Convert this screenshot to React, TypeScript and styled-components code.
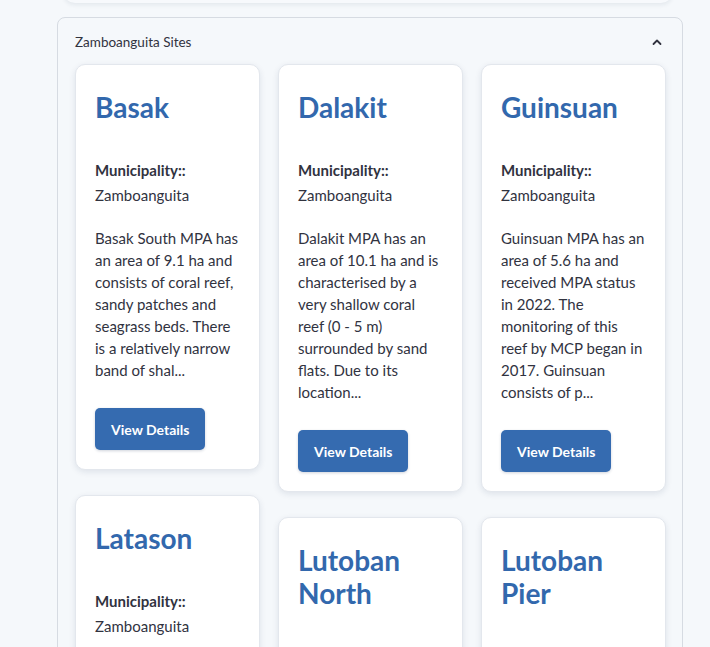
import React from "react";
import styled, { createGlobalStyle } from "styled-components";

const Global = createGlobalStyle`
  html, body { margin: 0; padding: 0; background: #f5f8fb; overflow: hidden; }
  body { font-family: Lato, "Liberation Sans", sans-serif; color: #31333f; }
  * { box-sizing: border-box; }
`;

const Page = styled.div`
  width: 710px;
  height: 647px;
  overflow: hidden;
  padding: 0 27px 0 57px;
  display: flex;
  flex-direction: column;
  gap: 14px;
  & > * { flex-shrink: 0; }
`;

const PrevBlock = styled.div`
  margin: -20px 10px 0 6px;
  height: 23px;
  background: #f7f9fc;
  border-radius: 0 0 12px 12px;
  box-shadow: 0 2px 4px rgba(30, 50, 80, 0.08);
`;

const Expander = styled.section`
  border: 1px solid #d6dbe2;
  border-radius: 8px;
  background: #f5f8fb;
  padding: 0 17px 0 17px;
`;

const Header = styled.div`
  height: 46px;
  display: flex;
  align-items: center;
  justify-content: space-between;
  font-size: 13.5px;
  color: #31333f;
  padding-top: 1px;
  padding-right: 2px;
`;

const Grid = styled.div`
  display: grid;
  grid-template-columns: repeat(3, 185px);
  column-gap: 18px;
  align-items: start;
`;

const Column = styled.div`
  display: flex;
  flex-direction: column;
  gap: 25px;
`;

const Card = styled.article`
  background: #ffffff;
  border: 1px solid #e3e7ed;
  border-radius: 10px;
  box-shadow: 0 2px 6px rgba(20, 40, 80, 0.1);
  padding: 26px 19px 19px 19px;
`;

const Title = styled.h3`
  margin: 0 0 34px;
  font-size: 28px;
  line-height: 33px;
  font-weight: 700;
  color: #3268ad;
`;

const Label = styled.div`
  font-size: 15px;
  font-weight: 700;
  line-height: 25px;
  color: #31333f;
`;

const Value = styled.div`
  font-size: 15px;
  line-height: 25px;
  color: #31333f;
  margin-bottom: 19px;
`;

const Desc = styled.p`
  margin: 0 0 27px;
  font-size: 15px;
  line-height: 22px;
  color: #31333f;
`;

const Button = styled.button`
  height: 42px;
  padding: 0 16px;
  border: none;
  border-radius: 5px;
  background: #356bb0;
  color: #ffffff;
  font-family: inherit;
  font-size: 14px;
  font-weight: 700;
  box-shadow: 0 1px 3px rgba(20, 40, 80, 0.2);
`;

type Site = { name: string; desc?: string };

const columns: Site[][] = [
  [
    {
      name: "Basak",
      desc: "Basak South MPA has an area of 9.1 ha and consists of coral reef, sandy patches and seagrass beds. There is a relatively narrow band of shal...",
    },
    { name: "Latason" },
  ],
  [
    {
      name: "Dalakit",
      desc: "Dalakit MPA has an area of 10.1 ha and is characterised by a very shallow coral reef (0 - 5 m) surrounded by sand flats. Due to its location...",
    },
    { name: "Lutoban North" },
  ],
  [
    {
      name: "Guinsuan",
      desc: "Guinsuan MPA has an area of 5.6 ha and received MPA status in 2022. The monitoring of this reef by MCP began in 2017. Guinsuan consists of p...",
    },
    { name: "Lutoban Pier" },
  ],
];

const SiteCard = ({ site }: { site: Site }) => (
  <Card>
    <Title>{site.name}</Title>
    <Label>Municipality::</Label>
    <Value>Zamboanguita</Value>
    <Desc>{site.desc ?? "Lorem ipsum dolor sit amet consectetur adipiscing elit sed do eiusmod tempor."}</Desc>
    <Button>View Details</Button>
  </Card>
);

export default function App() {
  return (
    <>
      <Global />
      <Page>
        <PrevBlock />
        <Expander>
          <Header>
            <span>Zamboanguita Sites</span>
            <svg width="12" height="12" viewBox="0 0 12 12" fill="none">
              <path d="M2.5 8 L6 4.5 L9.5 8" stroke="#31333f" strokeWidth="1.8" strokeLinecap="round" strokeLinejoin="round" />
            </svg>
          </Header>
          <Grid>
            {columns.map((col, i) => (
              <Column key={i}>
                {col.map((s) => (
                  <SiteCard key={s.name} site={s} />
                ))}
              </Column>
            ))}
          </Grid>
        </Expander>
      </Page>
    </>
  );
}
